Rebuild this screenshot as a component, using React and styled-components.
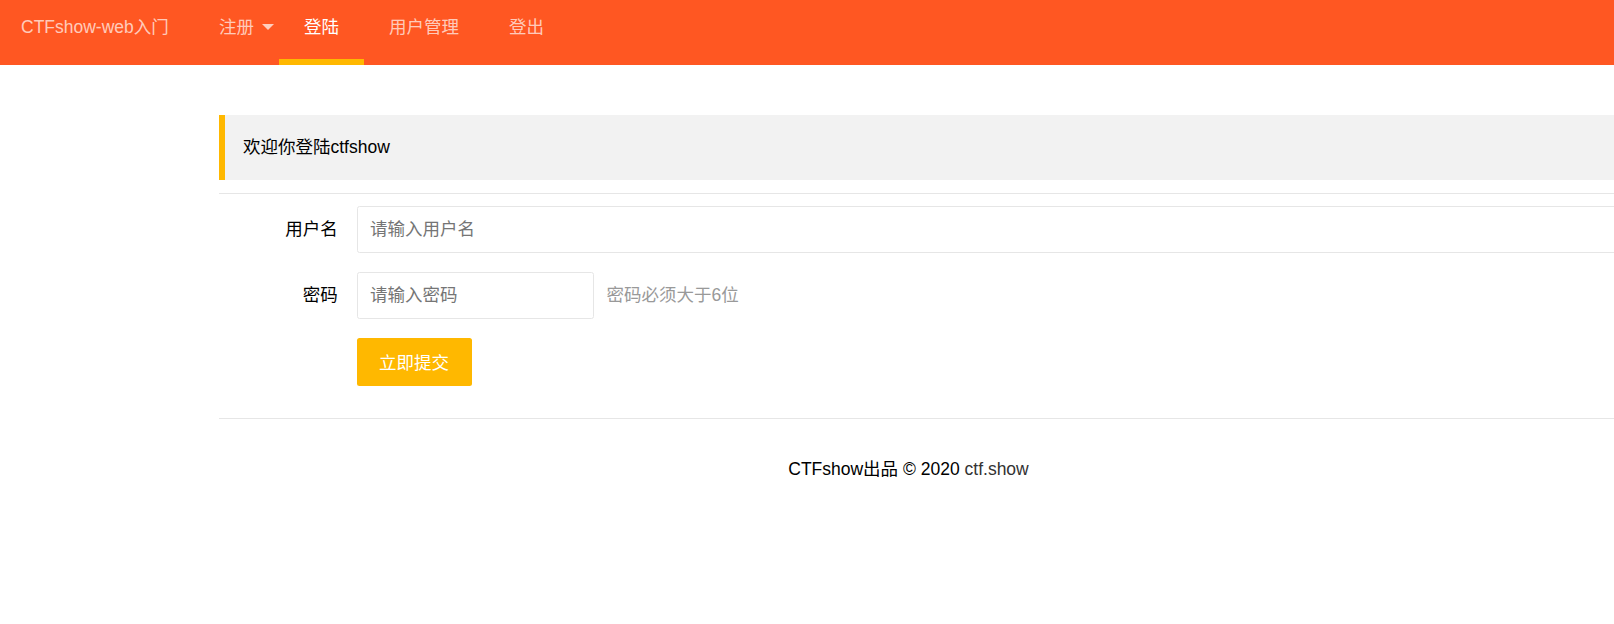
import React from "react";
import styled, { createGlobalStyle } from "styled-components";

const GlobalStyle = createGlobalStyle`
  html, body {
    margin: 0;
    padding: 0;
    background: #fff;
    overflow-x: hidden;
  }
  body {
    font-family: "Liberation Sans", Arial, "Noto Sans CJK SC", sans-serif;
    font-size: 17.5px;
    color: #000;
  }
  * { box-sizing: border-box; }
`;

const Header = styled.header`
  display: flex;
  align-items: stretch;
  height: 65px;
  background: #ff5722;
`;

const Logo = styled.div`
  width: 194px;
  padding-left: 21px;
  line-height: 54px;
  font-size: 17.5px;
  color: rgba(255, 255, 255, 0.7);
  white-space: nowrap;
`;

const Nav = styled.nav`
  display: flex;
`;

const NavItem = styled.a`
  position: relative;
  display: block;
  height: 65px;
  padding: 0 25px;
  line-height: 54px;
  font-size: 17.5px;
  white-space: nowrap;
  text-decoration: none;
  cursor: pointer;
  color: ${(p) => (p.$active ? "#fff" : "rgba(255, 255, 255, 0.7)")};

  &::after {
    content: "";
    display: ${(p) => (p.$active ? "block" : "none")};
    position: absolute;
    left: 0;
    right: 0;
    bottom: 0;
    height: 6px;
    background: #ffb800;
  }
`;

const Caret = styled.span`
  position: absolute;
  right: 5px;
  top: 24px;
  width: 0;
  height: 0;
  border-left: 6.5px solid transparent;
  border-right: 6.5px solid transparent;
  border-top: 6.5px solid rgba(255, 255, 255, 0.7);
`;

const Main = styled.main`
  padding: 50px 0 0 219px;
`;

const Quote = styled.div`
  height: 65px;
  line-height: 65px;
  padding: 0 18px;
  border-left: 6px solid #ffb800;
  background: #f2f2f2;
  font-size: 17.5px;
  color: #000;
`;

const Divider = styled.hr`
  height: 1px;
  margin: ${(p) => p.$top}px 0 ${(p) => p.$bottom}px;
  border: 0;
  background: #e6e6e6;
`;

const FormItem = styled.div`
  display: flex;
  align-items: center;
  margin-bottom: 18.75px;
`;

const Label = styled.label`
  flex-shrink: 0;
  width: 137.5px;
  padding-right: 18.75px;
  text-align: right;
  font-size: 17.5px;
  line-height: 25px;
  color: #000;
`;

const Input = styled.input`
  height: 47.5px;
  ${(p) =>
    p.$block
      ? "flex: 1; margin-right: -6px;"
      : "width: 237.5px; flex-shrink: 0;"}
  padding: 0 12.5px;
  border: 1px solid #e6e6e6;
  border-radius: 2.5px;
  background: #fff;
  font-family: inherit;
  font-size: 17.5px;
  color: #333;
  outline: none;

  &::placeholder {
    color: #757575;
  }
`;

const Hint = styled.span`
  margin-left: 12.5px;
  font-size: 17.5px;
  line-height: 25px;
  color: #999;
  white-space: nowrap;
`;

const ButtonRow = styled.div`
  display: flex;
  padding-left: 137.5px;
`;

const SubmitButton = styled.button`
  height: 47.5px;
  padding: 0 22.5px;
  border: none;
  border-radius: 2.5px;
  background: #ffb800;
  color: #fff;
  font-family: inherit;
  font-size: 17.5px;
  white-space: nowrap;
  cursor: pointer;
`;

const Footer = styled.footer`
  padding: 35px 16px 0 0;
  text-align: center;
  line-height: 30px;
  font-size: 17.5px;
  color: #000;
`;

const FooterLink = styled.a`
  color: #333;
  text-decoration: none;
`;

export default function App() {
  return (
    <>
      <GlobalStyle />
      <Header>
        <Logo>CTFshow-web入门</Logo>
        <Nav>
          <NavItem>
            注册
            <Caret />
          </NavItem>
          <NavItem $active>登陆</NavItem>
          <NavItem>用户管理</NavItem>
          <NavItem>登出</NavItem>
        </Nav>
      </Header>
      <Main>
        <Quote>欢迎你登陆ctfshow</Quote>
        <Divider $top={12.5} $bottom={12} />
        <form onSubmit={(e) => e.preventDefault()}>
          <FormItem>
            <Label>用户名</Label>
            <Input $block type="text" placeholder="请输入用户名" />
          </FormItem>
          <FormItem>
            <Label>密码</Label>
            <Input type="password" placeholder="请输入密码" />
            <Hint>密码必须大于6位</Hint>
          </FormItem>
          <ButtonRow>
            <SubmitButton type="submit">立即提交</SubmitButton>
          </ButtonRow>
        </form>
        <Divider $top={32} $bottom={0} />
        <Footer>
          CTFshow出品 © 2020 <FooterLink>ctf.show</FooterLink>
        </Footer>
      </Main>
    </>
  );
}
